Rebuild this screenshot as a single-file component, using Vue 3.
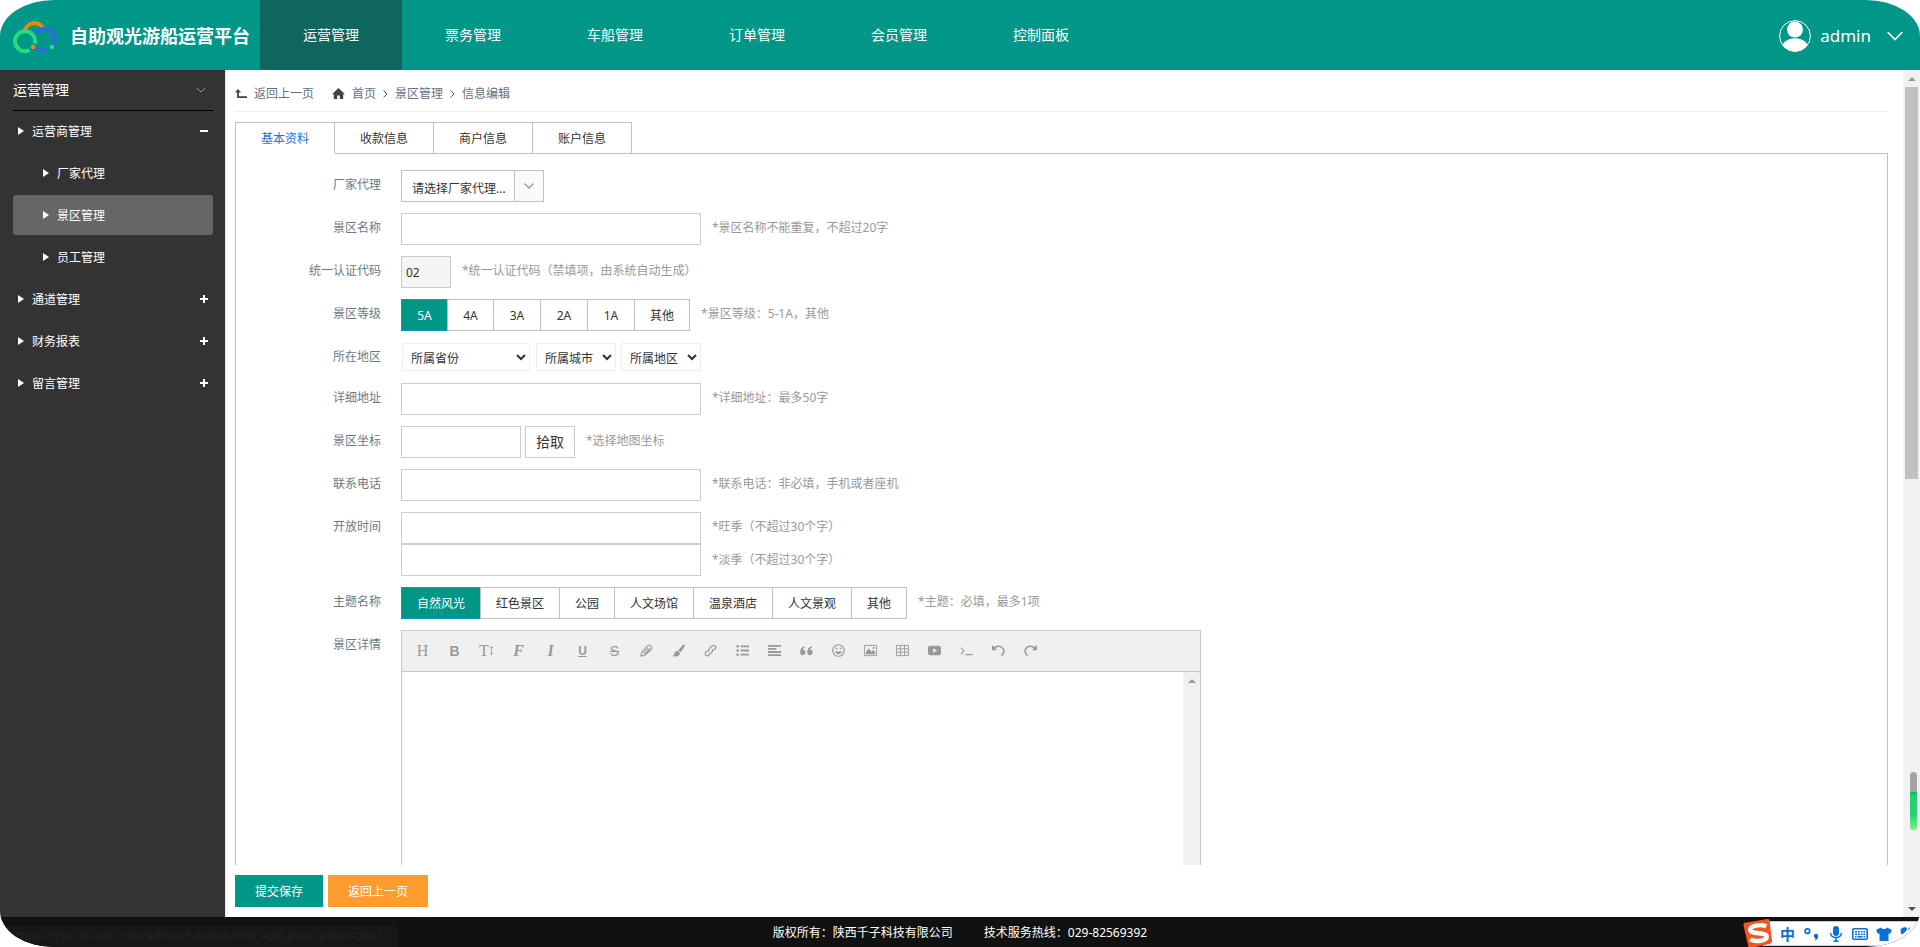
<script setup>
import { ref } from 'vue'

const topNav = ['运营管理', '票务管理', '车船管理', '订单管理', '会员管理', '控制面板']

const menu = [
  { label: '运营商管理', open: true, children: ['厂家代理', '景区管理', '员工管理'] },
  { label: '通道管理', open: false, children: [] },
  { label: '财务报表', open: false, children: [] },
  { label: '留言管理', open: false, children: [] },
]
const activeItem = '景区管理'

const tabs = ['基本资料', '收款信息', '商户信息', '账户信息']
const levels = ['5A', '4A', '3A', '2A', '1A', '其他']
const themes = ['自然风光', '红色景区', '公园', '人文场馆', '温泉酒店', '人文景观', '其他']

const tab = ref(0)
const level = ref(0)
const theme = ref(0)

const tools = [
  { name: '标题', text: 'H', cls: 'serif' },
  { name: '加粗', text: 'B', cls: 'bold' },
  { name: '字号', text: 'T', cls: 'serif size', svg: '<path d="M3 2.5v9M1.2 4.2 3 2.2l1.8 2M1.2 9.8 3 11.8l1.8-2" fill="none" stroke="currentColor"/>', box: '0 0 6 14' },
  { name: '字体', text: 'F', cls: 'script' },
  { name: '斜体', text: 'I', cls: 'italic' },
  { name: '下划线', text: 'U', cls: 'under' },
  { name: '删除线', text: 'S', cls: 'strike' },
  { name: '文字颜色', svg: '<path d="M1 13l.8-4.2L7.5 2.6c1-1 2.200-1.300 3-1.300L12.800 3.500c0 1-.3 2-1.300 3L5.300 12zM3.500 9.800l5.500-6M5.200 11l5.600-6" fill="none" stroke="currentColor" stroke-width="1.2"/>' },
  { name: '背景颜色', svg: '<path d="M13.500.8c.6.500.3 1.400-.2 2.300L9.400 9 6.700 6.600l4.700-5.100c.7-.7 1.500-1.200 2.100-.7zM6 7.300l2.700 2.500C8.500 13 4.500 14.300.6 12.900c1.600-.5 1.500-1.600 2-3C3.200 8.300 4.400 7.300 6 7.300z" fill="currentColor"/>' },
  { name: '链接', svg: '<path d="M5.600 8.600C4.500 7.400 4.700 6 5.700 5L8.600 2.100c1-1 2.500-1 3.400-.1s.9 2.400-.1 3.400l-1.500 1.500M8.400 5.400c1.100 1.200.9 2.600-.1 3.600l-2.900 2.900c-1 1-2.500 1-3.400.1s-.9-2.400.1-3.400l1.500-1.500" fill="none" stroke="currentColor" stroke-width="1.3"/>' },
  { name: '列表', svg: '<path d="M5 1.500h9v2H5zM5 6h9v2H5zM5 10.500h9v2H5z" fill="currentColor"/><circle cx="1.800" cy="2.500" r="1.400" fill="currentColor"/><circle cx="1.800" cy="7" r="1.400" fill="currentColor"/><circle cx="1.800" cy="11.500" r="1.400" fill="currentColor"/>' },
  { name: '对齐方式', svg: '<path d="M0 1h14v2H0zM0 4.300h9v2H0zM0 7.600h14v2H0zM0 11h14v2H0z" fill="currentColor"/>' },
  { name: '引用', svg: '<path d="M3.300 6.200a2.900 2.900 0 1 1-3.200 3C0 5.500 1.700 3 5.200 2.700v1.400C4 4.400 3.300 5 3.300 6.200zM11 6.200a2.900 2.900 0 1 1-3.200 3C7.700 5.500 9.400 3 12.900 2.700v1.400C11.700 4.400 11 5 11 6.200z" fill="currentColor"/>' },
  { name: '表情', svg: '<circle cx="7" cy="7" r="6.200" fill="none" stroke="currentColor" stroke-width="1.300"/><circle cx="4.800" cy="4.900" r="1" fill="currentColor"/><circle cx="9.200" cy="4.900" r="1" fill="currentColor"/><path d="M3.200 7.500c2.500.9 5.100.9 7.600 0-.5 4.500-7.100 4.500-7.600 0z" fill="currentColor"/>' },
  { name: '插入图片', svg: '<path d="M.5 1.500h13v11H.5z" fill="none" stroke="currentColor"/><path d="M2 11V8.500l3-4 3 3.800 2.200-1.800L12 9v2z" fill="currentColor"/><circle cx="10.300" cy="4.300" r="1.200" fill="currentColor"/>' },
  { name: '插入表格', svg: '<path d="M.5 1.500h13v11H.5zM.5 5.200h13M.5 8.800h13M4.800 1.500v11M9.200 1.500v11" fill="none" stroke="currentColor"/>' },
  { name: '插入视频', svg: '<path fill-rule="evenodd" d="M2.500 2h9C13.500 2 14 3 14 4.500v5c0 1.500-.5 2.500-2.500 2.500h-9C.5 12 0 11 0 9.500v-5C0 3 .5 2 2.500 2zM5.500 4.500v5L9.800 7z" fill="currentColor"/>' },
  { name: '插入代码', svg: '<path d="M1 4l3.300 3.500L1 11M6 11.500h7.500" fill="none" stroke="currentColor" stroke-width="1.200"/>' },
  { name: '撤销', svg: '<path d="M2 4.500C5.500 1.500 10 1.800 12 5c1.300 2.500.5 5.500-1.800 7.500" fill="none" stroke="currentColor" stroke-width="1.700"/><path d="M0 1.200v5.600h5.600z" fill="currentColor"/>' },
  { name: '重做', svg: '<path d="M12 4.500C8.500 1.500 4 1.800 2 5c-1.300 2.500-.5 5.500 1.800 7.500" fill="none" stroke="currentColor" stroke-width="1.700"/><path d="M14 1.200v5.600H8.400z" fill="currentColor"/>' },
]
</script>

<template>
  <div class="app">
    <header class="top">
      <div class="brand">
        <svg class="logo" viewBox="0 0 44 34" aria-hidden="true">
          <path d="M12 10A10 10 0 0 1 31 10" fill="none" stroke="#ff7f0a" stroke-width="4" />
          <path d="M22.500 14A10 10 0 0 1 40.500 24.500M35 29A10 10 0 0 1 23 27.500" fill="none" stroke="#2671d9" stroke-width="4" />
          <path d="M16.500 30.100A10 10 0 1 1 21.700 23.600" fill="none" stroke="#28dc7c" stroke-width="4" />
          <circle cx="20" cy="27" r="2.200" fill="#ff7f0a" />
          <circle cx="39" cy="27" r="2.200" fill="#28dc7c" />
        </svg>
        <h1>自助观光游船运营平台</h1>
      </div>
      <nav class="nav">
        <a v-for="(n, i) in topNav" :key="n" href="#" :class="{ on: i === 0 }">{{ n }}</a>
      </nav>
      <button class="user" type="button">
        <svg class="avatar" viewBox="0 0 32 32" aria-hidden="true">
          <defs><clipPath id="face"><circle cx="16" cy="16" r="15.500" /></clipPath></defs>
          <circle cx="16" cy="16" r="15.400" fill="none" stroke="#fff" />
          <g clip-path="url(#face)" fill="#fff">
            <circle cx="16" cy="9.500" r="8" />
            <ellipse cx="16" cy="29" rx="13.500" ry="10.800" />
          </g>
        </svg>
        <span>admin</span>
        <svg class="caret" viewBox="0 0 16 10" aria-hidden="true"><path d="M.7 1 8 8.500 15.300 1" fill="none" stroke="#fff" stroke-width="1.600" /></svg>
      </button>
    </header>

    <div class="middle">
      <aside class="side">
        <div class="side-title">
          <span>运营管理</span>
          <svg viewBox="0 0 10 6" width="10" height="6" aria-hidden="true"><path d="M.5.7 5 5 9.500.7" fill="none" stroke="#999" /></svg>
        </div>
        <template v-for="g in menu" :key="g.label">
          <a class="item" href="#"><i class="tri"></i><span>{{ g.label }}</span><i class="sign" :class="{ plus: !g.open }"></i></a>
          <a v-for="c in g.children" :key="c" class="item sub" :class="{ on: c === activeItem }" href="#"><i class="tri"></i><span>{{ c }}</span></a>
        </template>
      </aside>

      <main class="main">
        <div class="content">
          <nav class="crumbs">
            <a class="back" href="#">
              <svg viewBox="0 0 12 10" width="12" height="10" aria-hidden="true"><path d="M3 2v6.200h9" fill="none" stroke="#444" stroke-width="1.800" /><path d="M0 3.500 3 0l3 3.500z" fill="#444" /></svg>
              返回上一页
            </a>
            <a class="home" href="#">
              <svg viewBox="0 0 13 11" width="13" height="11" aria-hidden="true"><path d="M6.500 0 13 6.200h-1.800V11H7.800V7.500H5.200V11H1.800V6.200H0z" fill="#444" /></svg>
              首页
            </a>
            <svg class="sep" viewBox="0 0 5 8" width="5" height="8" aria-hidden="true"><path d="M.5.500 4 4 .5 7.500" fill="none" stroke="#555" /></svg>
            <a href="#">景区管理</a>
            <svg class="sep" viewBox="0 0 5 8" width="5" height="8" aria-hidden="true"><path d="M.5.500 4 4 .5 7.500" fill="none" stroke="#555" /></svg>
            <span>信息编辑</span>
          </nav>

          <div class="tabs" role="tablist">
            <button v-for="(t, i) in tabs" :key="t" type="button" role="tab" :aria-selected="tab === i" :class="{ on: tab === i }" @click="tab = i">{{ t }}</button>
          </div>

          <form class="panel" @submit.prevent>
            <div class="row">
              <label for="agent">厂家代理</label>
              <div class="combo">
                <input id="agent" type="text" value="请选择厂家代理..." readonly />
                <button type="button" aria-label="展开">
                  <svg viewBox="0 0 10 6" width="10" height="6" aria-hidden="true"><path d="M.5.500 5 5 9.500.5" fill="none" stroke="#999" stroke-width="1.400" /></svg>
                </button>
              </div>
            </div>
            <div class="row">
              <label for="name">景区名称</label>
              <input id="name" class="box" type="text" />
              <p class="hint">*景区名称不能重复，不超过20字</p>
            </div>
            <div class="row">
              <label for="code">统一认证代码</label>
              <input id="code" class="box code" type="text" value="02" readonly />
              <p class="hint">*统一认证代码（禁填项，由系统自动生成）</p>
            </div>
            <div class="row">
              <span class="label">景区等级</span>
              <div class="seg">
                <button v-for="(l, i) in levels" :key="l" type="button" :class="{ on: level === i }" @click="level = i">{{ l }}</button>
              </div>
              <p class="hint">*景区等级：5-1A，其他</p>
            </div>
            <div class="row">
              <label for="province">所在地区</label>
              <div class="areas">
                <select id="province" class="wide"><option>所属省份</option></select>
                <select aria-label="所属城市"><option>所属城市</option></select>
                <select aria-label="所属地区"><option>所属地区</option></select>
              </div>
            </div>
            <div class="row">
              <label for="address">详细地址</label>
              <input id="address" class="box" type="text" />
              <p class="hint">*详细地址：最多50字</p>
            </div>
            <div class="row">
              <label for="coord">景区坐标</label>
              <input id="coord" class="box coord" type="text" />
              <button class="pick" type="button">拾取</button>
              <p class="hint">*选择地图坐标</p>
            </div>
            <div class="row">
              <label for="phone">联系电话</label>
              <input id="phone" class="box" type="text" />
              <p class="hint">*联系电话：非必填，手机或者座机</p>
            </div>
            <div class="row">
              <label for="peak">开放时间</label>
              <div class="stack">
                <input id="peak" class="box" type="text" />
                <input class="box" type="text" aria-label="淡季开放时间" />
              </div>
              <div class="hints">
                <p class="hint">*旺季（不超过30个字）</p>
                <p class="hint">*淡季（不超过30个字）</p>
              </div>
            </div>
            <div class="row">
              <span class="label">主题名称</span>
              <div class="seg">
                <button v-for="(t, i) in themes" :key="t" type="button" :class="{ on: theme === i }" @click="theme = i">{{ t }}</button>
              </div>
              <p class="hint">*主题：必填，最多1项</p>
            </div>
            <div class="row">
              <label for="detail">景区详情</label>
              <div class="editor">
                <div class="toolbar">
                  <button v-for="t in tools" :key="t.name" type="button" :class="t.cls" :aria-label="t.name">
                    <span v-if="t.text">{{ t.text }}</span>
                    <svg v-if="t.svg" :viewBox="t.box || '0 0 14 14'" aria-hidden="true" v-html="t.svg"></svg>
                  </button>
                </div>
                <div class="edit-body">
                  <textarea id="detail"></textarea>
                  <div class="track"><i class="arrow up"></i></div>
                </div>
              </div>
            </div>
          </form>

          <div class="actions">
            <button type="button" class="save">提交保存</button>
            <button type="button" class="return">返回上一页</button>
          </div>
        </div>

        <div class="track page-track">
          <i class="arrow up"></i>
          <div class="thumb"></div>
          <i class="arrow down"></i>
        </div>
      </main>
    </div>

    <footer class="foot">
      <span>版权所有：陕西千子科技有限公司</span>
      <span>技术服务热线：029-82569392</span>
    </footer>

    <div class="status">https://zzyc.qz-soft.com/admin/baseset/info_edit.aspx?action=Add</div>
    <div class="meter"><i></i></div>

    <div class="ime">
      <svg class="sogou" viewBox="0 0 32 32" aria-hidden="true">
        <path d="M3 5 26 1q2-.3 2.500 1.500L31 24q.2 2-1.800 2.500L9 31q-2 .3-2.500-1.500L1.500 7.500Q1.200 5.300 3 5z" fill="#f4561f" />
        <path d="M25 8.500C19 6 8 8 8.500 12.500S25 14.500 25.500 19 14 25.500 8.500 22" fill="none" stroke="#fff" stroke-width="4.600" />
      </svg>
      <b>中</b>
      <svg viewBox="0 0 14 14" aria-hidden="true"><circle cx="3" cy="4.500" r="2" fill="none" stroke="#0a6fd6" stroke-width="1.500" /><path d="M12.500 8.500c0 2-1.200 3.700-3.300 4.500.8-.9 1-1.500.8-2.200a2 2 0 1 1 2.500-2.300z" fill="#0a6fd6" /></svg>
      <svg viewBox="0 0 14 16" aria-hidden="true"><rect x="4" y="0" width="6" height="10" rx="3" fill="#0a6fd6" /><path d="M1.500 7c0 6 11 6 11 0M7 12v3.500M4.500 15.200h5" fill="none" stroke="#0a6fd6" stroke-width="1.600" /></svg>
      <svg viewBox="0 0 16 14" aria-hidden="true"><rect x=".8" y="1.800" width="14.400" height="10.400" rx="1" fill="none" stroke="#0a6fd6" stroke-width="1.600" /><path d="M3 4.800h2M6 4.800h1.800M8.800 4.800h1.800M11.500 4.800h1.700M3 7.200h2M6 7.200h1.800M8.800 7.200h1.800M11.500 7.200h1.700M3 9.800h1.500M5.500 9.800h5M11.500 9.800h1.700" stroke="#0a6fd6" stroke-width="1.400" /></svg>
      <svg viewBox="0 0 16 14" aria-hidden="true"><path d="M5 .5c1 2 5 2 6 0l5 2.500-2 4-1.500-.6V14h-9V6.400L2 7 0 3z" fill="#0a6fd6" /></svg>
      <svg viewBox="0 0 16 16" aria-hidden="true"><path d="M1 3.500C2 2 4.500 1.500 6.500 2c0 2.500-1.500 4.500-5 6zM8 4l2-2.500" fill="#0a6fd6" stroke="#0a6fd6" /></svg>
    </div>
  </div>
</template>

<style>
body {
  background: #fff;
}
</style>

<style scoped>
* {
  box-sizing: border-box;
}
.app {
  position: relative;
  display: flex;
  flex-direction: column;
  height: 100vh;
  overflow: hidden;
  background: #fff;
  border-radius: 54px / 36px;
  font: 12px/20px "Noto Sans", "Noto Sans CJK SC", sans-serif;
  color: #333;
}
button,
input,
select,
textarea {
  margin: 0;
  font: inherit;
  color: inherit;
  border-radius: 0;
  outline: none;
}
button {
  cursor: pointer;
}
a {
  color: inherit;
  text-decoration: none;
}
p {
  margin: 0;
}
.top {
  flex: none;
  display: flex;
  height: 70px;
  background: #009688;
  color: #fff;
}
.brand {
  display: flex;
  align-items: center;
  width: 260px;
  padding-left: 13px;
}
.logo {
  width: 44px;
  height: 34px;
  margin: 4px 13px 0 0;
}
.brand h1 {
  margin: 0;
  padding-top: 2px;
  font-size: 18px;
  line-height: 26px;
  white-space: nowrap;
}
.nav {
  display: flex;
  flex: 1;
  font-size: 14px;
  line-height: 70px;
}
.nav a {
  width: 142px;
  text-align: center;
}
.nav .on {
  background: #0f665e;
}
.user {
  display: flex;
  align-items: center;
  padding: 2px 17px 0 0;
  border: 0;
  background: none;
  font-size: 17px;
}
.avatar {
  width: 32px;
  height: 32px;
  margin-right: 9px;
}
.caret {
  width: 16px;
  height: 10px;
  margin-left: 16px;
}
.middle {
  flex: 1;
  display: flex;
  min-height: 0;
}
.side {
  flex: none;
  width: 226px;
  padding: 0 12px 0 13px;
  border-right: 1px solid #e2e2e2;
  background: #333;
  color: #fff;
}
.side-title {
  display: flex;
  align-items: center;
  justify-content: space-between;
  height: 41px;
  padding-right: 7px;
  border-bottom: 1px solid #000;
  font-size: 14px;
}
.item {
  display: flex;
  align-items: center;
  height: 40px;
  margin-bottom: 2px;
  padding: 0 5px;
  border-radius: 3px;
}
.sub {
  padding-left: 30px;
}
.sub.on {
  background: #666;
}
.tri {
  margin-right: 8px;
  border-left: 6px solid #fff;
  border-top: 4px solid transparent;
  border-bottom: 4px solid transparent;
}
.item span {
  flex: 1;
  padding-top: 2px;
}
.sign {
  width: 8px;
  height: 8px;
  background: linear-gradient(#fff, #fff) center / 8px 2px no-repeat;
}
.sign.plus {
  background: linear-gradient(#fff, #fff) center / 8px 2px no-repeat, linear-gradient(#fff, #fff) center / 2px 8px no-repeat;
}
.main {
  flex: 1;
  display: flex;
  min-width: 0;
}
.content {
  flex: 1;
  display: flex;
  flex-direction: column;
  min-width: 0;
  padding: 0 15px 0 9px;
}
.crumbs {
  flex: none;
  display: flex;
  align-items: center;
  height: 42px;
  padding-top: 6px;
  border-bottom: 1px solid #eee;
  color: #667080;
}
.crumbs a {
  display: flex;
  align-items: center;
}
.back svg,
.home svg {
  margin-right: 7px;
}
.home {
  margin-left: 18px;
}
.sep {
  margin: 0 7px;
}
.tabs {
  flex: none;
  display: flex;
  height: 32px;
  margin-top: 10px;
  border-left: 1px solid #c0c0c0;
}
.tabs::after {
  content: "";
  flex: 1;
  border-bottom: 1px solid #c0c0c0;
}
.tabs button {
  width: 99px;
  padding: 2px 0 0;
  border: 1px solid #c0c0c0;
  border-left: 0;
  background: #fff;
}
.tabs .on {
  border-bottom-color: #fff;
  color: #2a6fc9;
}
.panel {
  flex: 1;
  display: flex;
  flex-direction: column;
  gap: 11px;
  min-height: 0;
  overflow: hidden;
  padding: 16px 20px 0;
  border: 1px solid #c0c0c0;
  border-width: 0 1px;
}
.row {
  flex: none;
  display: flex;
  align-items: flex-start;
}
.row > label,
.label {
  width: 125px;
  margin-right: 20px;
  line-height: 30px;
  text-align: right;
  color: #6b7a82;
}
.hint {
  margin-left: 11px;
  line-height: 30px;
  color: #999;
}
.box {
  width: 300px;
  height: 32px;
  padding: 0 4px;
  border: 1px solid #ccc;
  background: #fff;
}
.code {
  width: 50px;
  background: #f4f4f4;
}
.coord {
  width: 120px;
}
.combo {
  display: flex;
  width: 143px;
  height: 32px;
  border: 1px solid #c0c0c0;
}
.combo input {
  flex: 1;
  min-width: 0;
  padding: 6px 0 0 10px;
  border: 0;
  background: #fff;
}
.combo button {
  display: flex;
  align-items: center;
  justify-content: center;
  width: 29px;
  padding: 0;
  border: 0;
  border-left: 1px solid #c0c0c0;
  background: #fafafa;
}
.seg {
  display: flex;
}
.seg button {
  min-width: 47px;
  height: 32px;
  padding: 2px 15px 0;
  border: 1px solid #c0c0c0;
  border-left-width: 0;
  background: #fff;
}
.seg .on {
  min-width: 46px;
  border-color: #1893b8;
  border-left-width: 1px;
  border-right-width: 0;
  background: #009688;
  color: #fff;
}
.seg .on + button {
  border-left-width: 1px;
}
.areas {
  display: flex;
  gap: 5px;
  padding: 1px;
}
.areas select {
  width: 80px;
  height: 28px;
  padding: 2px 0 0 4px;
  border: 1px solid #eee;
  background: #fff;
}
.areas .wide {
  width: 128px;
  margin-right: 1px;
}
.pick {
  width: 50px;
  height: 32px;
  margin-left: 4px;
  padding: 0;
  border: 1px solid #ccc;
  background: #fff;
  font-size: 14px;
}
.stack,
.hints {
  display: flex;
  flex-direction: column;
}
.hints {
  gap: 3px;
}
.editor {
  width: 800px;
  border: 1px solid #c9c9c9;
}
.toolbar {
  display: flex;
  height: 41px;
  padding-left: 5px;
  border-bottom: 1px solid #c9c9c9;
  background: #f0f0f0;
}
.toolbar button {
  display: flex;
  align-items: center;
  justify-content: center;
  width: 32px;
  padding: 0 1px 1px 0;
  border: 0;
  background: none;
  color: #999;
  font: 16px/20px "Liberation Serif", serif;
}
.toolbar svg {
  width: 13px;
  height: 13px;
}
.toolbar .size svg {
  width: 5px;
}
.toolbar .bold {
  font: bold 14px/20px "Liberation Sans", sans-serif;
}
.toolbar .script,
.toolbar .italic {
  font-style: italic;
  font-weight: bold;
}
.toolbar .under {
  font: bold 12px/20px "Liberation Sans", sans-serif;
  text-decoration: underline;
}
.toolbar .strike {
  font: 14px/20px "Liberation Sans", sans-serif;
  text-decoration: line-through;
}
.edit-body {
  display: flex;
  height: 300px;
}
.edit-body textarea {
  flex: 1;
  padding: 10px;
  border: 0;
  resize: none;
}
.track {
  flex: none;
  display: flex;
  flex-direction: column;
  align-items: center;
  width: 17px;
  padding: 7px 0 6px;
  background: #f1f1f1;
}
.arrow {
  border: 4px solid transparent;
  border-top-width: 0;
  border-bottom: 4px solid #999;
}
.arrow.down {
  margin-top: auto;
  border-top: 4px solid #505050;
  border-bottom-width: 0;
}
.thumb {
  width: 13px;
  height: 47%;
  margin-top: 6px;
  background: #c1c1c1;
}
.actions {
  flex: none;
  display: flex;
  gap: 5px;
  padding: 10px 0;
  color: #fff;
}
.actions button {
  height: 32px;
  padding: 2px 0 0;
  border: 0;
}
.save {
  width: 88px;
  background: #009688;
}
.return {
  width: 100px;
  background: #ff9c30;
}
.foot {
  flex: none;
  display: flex;
  align-items: center;
  justify-content: center;
  gap: 31px;
  height: 30px;
  padding-top: 2px;
  background: #111;
  color: #fff;
}
.status {
  position: absolute;
  left: 0;
  bottom: 0;
  width: 397px;
  height: 21px;
  padding: 0 8px;
  border-radius: 0 3px 0 0;
  background: #171717;
  color: #222;
}
.meter {
  position: absolute;
  right: 3px;
  bottom: 117px;
  width: 7px;
  height: 58px;
  padding-top: 20px;
  border-radius: 4px;
  overflow: hidden;
  background: #a3a3a3;
}
.meter i {
  display: block;
  height: 38px;
  background: linear-gradient(#12b65c, #26cf70 4px, #2bd06f 60%, #7df589);
}
.ime {
  position: absolute;
  right: 0;
  bottom: 1px;
  display: flex;
  align-items: center;
  gap: 8px;
  width: 157px;
  height: 25px;
  border-top: 1px solid #c3cce0;
  border-bottom: 1px solid #c3cce0;
  background: #fff;
}
.ime svg {
  flex: none;
  width: 16px;
  height: 16px;
}
.ime .sogou {
  width: 31px;
  height: 31px;
  margin: 0 -1px 0 -21px;
}
.ime b {
  width: 16px;
  font-size: 15px;
  color: #0a6fd6;
}
</style>
